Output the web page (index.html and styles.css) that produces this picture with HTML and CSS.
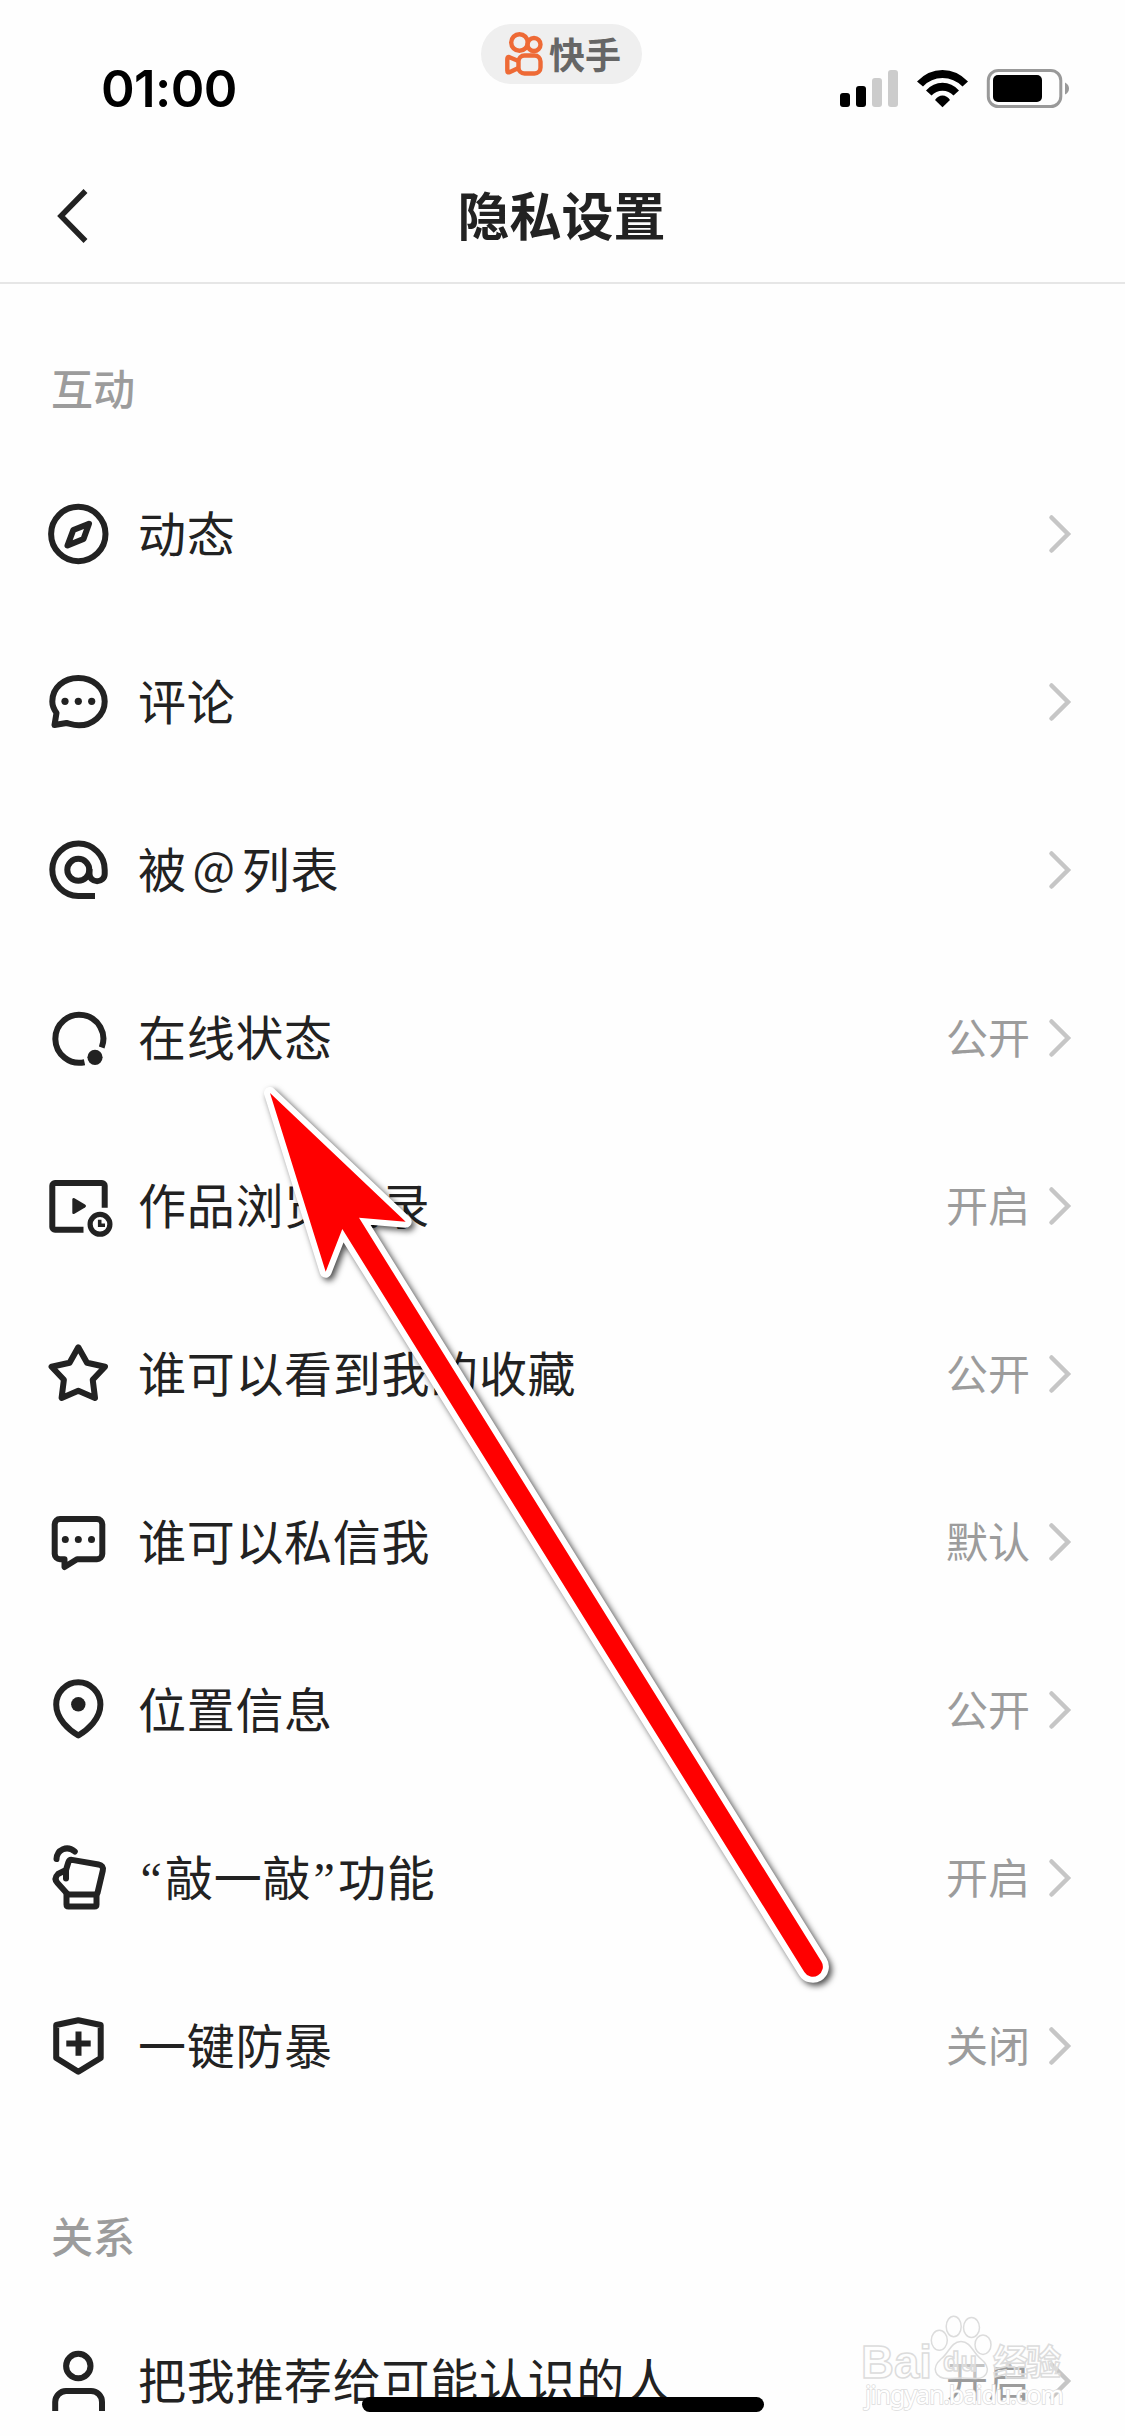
FILE: index.html
```html
<!DOCTYPE html>
<html lang="zh-CN">
  <head>
    <meta charset="UTF-8">
    <title>隐私设置</title>
    <link rel="stylesheet" href="styles.css">
  </head>
  <body>
    <div class="screen">
      <div class="status-bar">
        <span class="time">01:00</span>
        <div class="app-pill">
          <svg class="app-logo" viewBox="0 0 38 44">
            <circle cx="14.5" cy="10.5" r="8.3" />
            <circle cx="29" cy="12.5" r="6.5" />
            <rect x="13.5" y="23.5" width="22" height="18" rx="6" />
            <path d="M13.5 29L4.5 25.2Q2.3 24.5 2.3 27V38.5Q2.3 41 4.5 40.2L13.5 36" />
          </svg>
          <span>快手</span>
        </div>
        <svg class="status-icons" viewBox="0 0 230 40">
          <rect x="0" y="24" width="10" height="14" rx="3" />
          <rect x="16" y="17" width="10" height="21" rx="3" />
          <rect x="32" y="9" width="10" height="29" rx="3" fill="#ccc" />
          <rect x="48" y="1" width="10" height="37" rx="3" fill="#ccc" />
          <path d="M77 12.5Q88 1 102.5 1T128 12.5L122.5 17.5Q114 9 102.5 9T83 17.5Z" />
          <path d="M86 21.5Q93 13.8 102.5 13.8T119 21.5L113.5 26.5Q109 21.8 102.5 21.8T91.5 26.5Z" />
          <path d="M95 31Q98 26.5 102.5 26.5T110 31L102.5 38.3Z" />
          <rect x="148.3" y="1.5" width="72.5" height="36" rx="10" fill="none" stroke="#999" stroke-width="3" />
          <rect x="153" y="6" width="49" height="27" rx="5" />
          <path d="M225 13.5Q229 15.5 229 19.5T225 25.5Z" fill="#999" />
        </svg>
      </div>

      <div class="nav-bar">
        <svg class="back" viewBox="0 0 32 56"><path d="M28.5 3L4 28L28.5 53" /></svg>
        <h1>隐私设置</h1>
      </div>

      <div class="content">
        <h2>互动</h2>
        <div class="row">
          <svg class="icon" viewBox="0 0 64 64">
            <circle cx="32.3" cy="32" r="27.2" />
            <path d="M43 21.8L27.3 28L21.5 43.5L37.5 37Z" />
          </svg>
          <span class="label">动态</span>
          <svg class="arrow" viewBox="0 0 24 40"><path d="M3.5 3.5L20 20L3.5 36.5" /></svg>
        </div>
        <div class="row">
          <svg class="icon" viewBox="0 0 64 64">
            <path d="M8.5 55L10.5 43C8 39.5 6.3 36 6.3 31.5C6.3 17.5 18 8 32.3 8S58.7 17.5 58.7 31.5S46 55.3 33 55.3C28 55.3 24.5 54 20.5 53Z" />
            <g class="fill"><circle cx="19" cy="31.3" r="3.6" /><circle cx="32.3" cy="31.3" r="3.6" /><circle cx="45.7" cy="31.3" r="3.6" /></g>
          </svg>
          <span class="label">评论</span>
          <svg class="arrow" viewBox="0 0 24 40"><path d="M3.5 3.5L20 20L3.5 36.5" /></svg>
        </div>
        <div class="row">
          <svg class="icon" viewBox="0 0 64 64">
            <circle cx="32.3" cy="31.8" r="11" />
            <path class="butt" d="M49 58H32.3A26.2 26.2 0 1 1 58.7 32V36A7.6 7.2 0 0 1 43.5 36V31" />
          </svg>
          <span class="label">被<span class="at">@</span>列表</span>
          <svg class="arrow" viewBox="0 0 24 40"><path d="M3.5 3.5L20 20L3.5 36.5" /></svg>
        </div>
        <div class="row">
          <svg class="icon" viewBox="0 0 64 64">
            <path class="butt" d="M38.5 56.2A24 24 0 1 1 55.7 41.5" />
            <circle class="fill" cx="49" cy="51.3" r="7.6" />
          </svg>
          <span class="label">在线状态</span>
          <span class="value">公开</span>
          <svg class="arrow" viewBox="0 0 24 40"><path d="M3.5 3.5L20 20L3.5 36.5" /></svg>
        </div>
        <div class="row">
          <svg class="icon" viewBox="0 0 64 64">
            <path class="butt" d="M37.5 55.7H9A2.7 2.7 0 0 1 6.3 53V11.7A2.7 2.7 0 0 1 9 9H56A2.7 2.7 0 0 1 58.7 11.7V33.7" />
            <path class="fill" d="M26.3 25.5Q26.3 23.3 28.5 24.3L39 30.5Q41 32 39 33.5L28.5 39.7Q26.3 40.8 26.3 38.5Z" />
            <circle class="clock" cx="54" cy="50.3" r="9.9" />
            <path class="hand" d="M53.7 45.8V51.2H59" />
          </svg>
          <span class="label">作品浏览记录</span>
          <span class="value">开启</span>
          <svg class="arrow" viewBox="0 0 24 40"><path d="M3.5 3.5L20 20L3.5 36.5" /></svg>
        </div>
        <div class="row">
          <svg class="icon" viewBox="0 0 64 64">
            <path d="M32.3 5.3L41 20.8L59 24.7L46.7 37.7L49 55.9L32.3 48.8L15.6 55.9L17.9 37.7L5.6 24.7L23.6 20.8Z" />
          </svg>
          <span class="label">谁可以看到我的收藏</span>
          <span class="value">公开</span>
          <svg class="arrow" viewBox="0 0 24 40"><path d="M3.5 3.5L20 20L3.5 36.5" /></svg>
        </div>
        <div class="row">
          <svg class="icon" viewBox="0 0 64 64">
            <path d="M18.5 57V49.2H14A5.3 5.3 0 0 1 8.7 44V14.3A5.3 5.3 0 0 1 14 9H51A5.3 5.3 0 0 1 56.3 14.3V44A5.3 5.3 0 0 1 51 49.2H31Z" />
            <g class="fill"><circle cx="19.3" cy="29.5" r="3.5" /><circle cx="32.3" cy="29.5" r="3.5" /><circle cx="45.5" cy="29.5" r="3.5" /></g>
          </svg>
          <span class="label">谁可以私信我</span>
          <span class="value">默认</span>
          <svg class="arrow" viewBox="0 0 24 40"><path d="M3.5 3.5L20 20L3.5 36.5" /></svg>
        </div>
        <div class="row">
          <svg class="icon" viewBox="0 0 64 64">
            <path d="M32.3 57.5C23 52 10.2 41 10.2 26.5A22.1 22.2 0 0 1 54.4 26.5C54.4 41 41.6 52 32.3 57.5Z" />
            <circle class="fill" cx="32.3" cy="26.3" r="7.2" />
          </svg>
          <span class="label">位置信息</span>
          <span class="value">公开</span>
          <svg class="arrow" viewBox="0 0 24 40"><path d="M3.5 3.5L20 20L3.5 36.5" /></svg>
        </div>
        <div class="row">
          <svg class="icon" viewBox="0 0 64 64">
            <path d="M10.5 13C11 3.5 21 -1 28.8 5.5" />
            <path d="M20 32.5V24L22.3 16.5Q23.2 13.5 26 13.9L52.5 18.5Q57.8 19.5 56.8 24.5L51.5 47M20 24L12 28Q7.5 32.5 11.5 37L21 47.5" />
            <path d="M20.5 48.5H50.5V58.5Q50.5 60.5 48.5 60.5H22.5Q20.5 60.5 20.5 58.5Z" />
          </svg>
          <span class="label"><span class="quote">“</span>敲一敲<span class="quote">”</span>功能</span>
          <span class="value">开启</span>
          <svg class="arrow" viewBox="0 0 24 40"><path d="M3.5 3.5L20 20L3.5 36.5" /></svg>
        </div>
        <div class="row">
          <svg class="icon" viewBox="0 0 64 64">
            <path d="M32.3 6.3L54.7 11V44L32.3 57.8L10.2 44V11Z" />
            <path class="butt" d="M20.3 29.5H44.7M32.5 17.5V41.7" />
          </svg>
          <span class="label">一键防暴</span>
          <span class="value">关闭</span>
          <svg class="arrow" viewBox="0 0 24 40"><path d="M3.5 3.5L20 20L3.5 36.5" /></svg>
        </div>

        <h2>关系</h2>
        <div class="row">
          <svg class="icon" viewBox="0 0 64 64">
            <circle cx="32.3" cy="17" r="12.2" />
            <path d="M9.2 66V53A11 11 0 0 1 20 42H45A11 11 0 0 1 56 53V66" />
          </svg>
          <span class="label">把我推荐给可能认识的人</span>
          <span class="value">开启</span>
          <svg class="arrow" viewBox="0 0 24 40"><path d="M3.5 3.5L20 20L3.5 36.5" /></svg>
        </div>
      </div>

      <div class="home-indicator"></div>

      <svg class="pointer" viewBox="0 0 1125 2436">
        <path d="M270 1093L405.7 1221.7L359 1217.7L821.4 1961.5A10 10 0 0 1 804.3 1972L342.3 1229L325.7 1271.7Z" />
      </svg>

      <svg class="watermark" viewBox="0 0 220 110">
        <g class="paw">
          <ellipse cx="77.3" cy="30.3" rx="8" ry="10" />
          <ellipse cx="91.7" cy="16.5" rx="7.5" ry="10.3" />
          <ellipse cx="109.5" cy="17.5" rx="8" ry="10" />
          <ellipse cx="121" cy="34.7" rx="8" ry="9.7" />
          <path d="M99 31.5C109 31.5 111 43 119 49C129 57 127 69 113 68.5C105 68 95 68 88 68.5C71 69 70 57 79 49C87 43 89 31.5 99 31.5Z" />
        </g>
        <text class="wm-bai" x="-1" y="68" textLength="71" lengthAdjust="spacingAndGlyphs">Bai</text>
        <text class="wm-du" x="81" y="61" textLength="34">du</text>
        <text class="wm-cn" x="131" y="65" textLength="68">经验</text>
        <text class="wm-url" x="3" y="94" textLength="199">jingyan.baidu.com</text>
      </svg>
    </div>
  </body>
</html>
```
FILE: styles.css
```css
* {
  box-sizing: border-box;
}

body {
  margin: 0;
  background-color: #fefefe;
  color: #222;
  font-family: "Noto Sans CJK SC", sans-serif;
}

.screen {
  position: relative;
  width: 1125px;
  height: 2436px;
  overflow: hidden;
}

/* status bar */
.status-bar {
  display: flex;
  justify-content: space-between;
  align-items: flex-start;
  height: 150px;
  padding: 24px 55px 0 101px;
}

.time {
  width: 240px;
  margin-top: 35px;
  font-family: Inter, sans-serif;
  font-size: 51px;
  line-height: 60px;
  font-weight: 600;
  letter-spacing: -0.6px;
  color: #000;
}

.app-pill {
  display: flex;
  align-items: center;
  gap: 6px;
  width: 161px;
  height: 60px;
  margin-right: 58px;
  padding-left: 24px;
  border-radius: 30px;
  background-color: #efefef;
  color: #666;
  font-size: 36px;
  line-height: 56px;
  font-weight: 700;
}

.app-pill span {
  padding-bottom: 3px;
}

.app-logo {
  width: 38px;
  height: 44px;
  fill: none;
  stroke: #ee6a36;
  stroke-width: 4.4;
}

.status-icons {
  width: 230px;
  height: 40px;
  margin-top: 45px;
}

/* title */
.nav-bar {
  display: grid;
  grid-template-columns: 120px 1fr 120px;
  align-items: center;
  height: 134px;
  border-bottom: 2px solid #e6e6e6;
}

.back {
  width: 32px;
  height: 56px;
  margin-left: 57px;
  fill: none;
  stroke: #222;
  stroke-width: 5.5;
}

h1 {
  margin: 0;
  padding: 0 2px 4px 0;
  font-size: 52px;
  line-height: 70px;
  font-weight: 700;
  text-align: center;
}

/* list */
.content {
  height: 2127px;
  overflow: hidden;
}

h2 {
  margin: 0;
  padding: 70px 51px 31px;
  font-size: 42px;
  line-height: 65px;
  font-weight: 500;
  color: #9c9c9c;
}

.row + h2 {
  padding-top: 72px;
  padding-bottom: 30px;
}

.row {
  display: flex;
  align-items: center;
  height: 168px;
  padding: 0 53px 0 46px;
}

.icon {
  width: 64px;
  height: 64px;
  margin-right: 28px;
  overflow: visible;
  fill: none;
  stroke: #222;
  stroke-width: 6;
  stroke-linecap: round;
  stroke-linejoin: round;
}

.icon .fill {
  fill: #222;
  stroke: none;
}

.icon .butt {
  stroke-linecap: butt;
}

.icon .clock {
  stroke-width: 5.2;
}

.icon .hand {
  stroke-width: 3.6;
  stroke-linecap: butt;
  stroke-linejoin: miter;
}

.label {
  flex: 1;
  padding-bottom: 6px;
  font-size: 48px;
  line-height: 70px;
  letter-spacing: 0.7px;
}

.at {
  display: inline-block;
  width: 55px;
  font-size: 45px;
  line-height: 60px;
  text-align: center;
  vertical-align: 3px;
}

.quote {
  display: inline-block;
  width: 27px;
  font-family: "Liberation Serif", serif;
  line-height: 60px;
  text-align: center;
}

.value {
  margin-right: 18px;
  padding-bottom: 5px;
  font-size: 42px;
  line-height: 60px;
  color: #9c9c9c;
}

.arrow {
  width: 24px;
  height: 40px;
  fill: none;
  stroke: #c6c6c6;
  stroke-width: 4.5;
  stroke-linecap: round;
}

/* overlays */
.home-indicator {
  position: absolute;
  left: 362px;
  top: 2397px;
  width: 402px;
  height: 15px;
  border-radius: 8px;
  background-color: #000;
}

.pointer {
  position: absolute;
  left: 0;
  top: 0;
  width: 1125px;
  height: 2436px;
  fill: #f00;
  stroke: #fff;
  stroke-width: 12;
  stroke-linejoin: round;
  paint-order: stroke;
  filter: drop-shadow(3px 3px 3px rgba(0, 0, 0, 0.7));
}

.watermark {
  position: absolute;
  left: 862px;
  top: 2310px;
  width: 220px;
  height: 110px;
  fill: rgba(255, 255, 255, 0.4);
  stroke: #dcdcdc;
  stroke-width: 1.5;
}

.wm-bai,
.wm-du {
  font-family: "Liberation Sans", sans-serif;
  font-weight: 700;
}

.wm-bai {
  font-size: 47px;
}

.wm-du {
  font-size: 27px;
}

.wm-cn {
  font-size: 35px;
  font-weight: 700;
}

.wm-url {
  font-family: "Noto Sans", sans-serif;
  font-size: 25px;
  fill: #fff;
  paint-order: stroke;
}
```
